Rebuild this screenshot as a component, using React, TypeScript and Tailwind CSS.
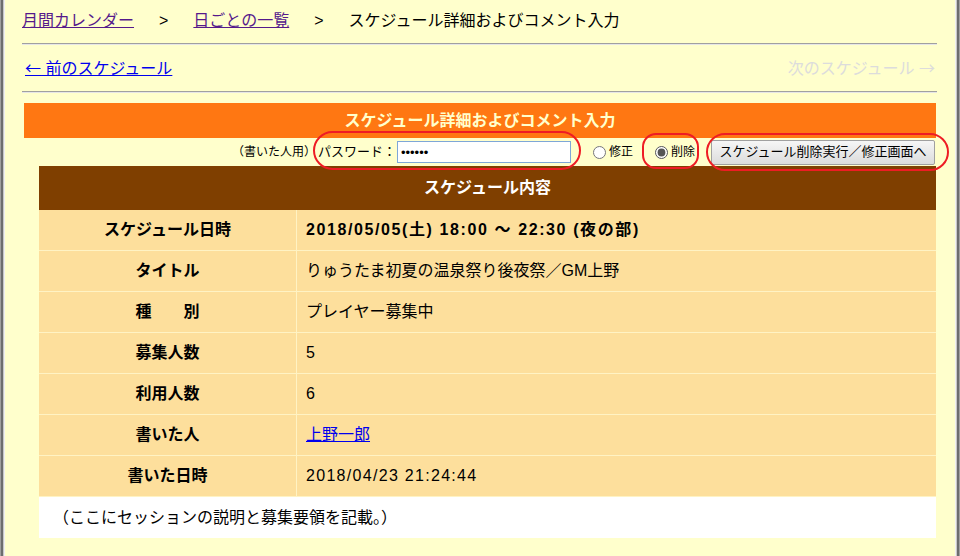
import React from "react";

const rows: { label: string; value: React.ReactNode; cls?: string }[] = [
  { label: "スケジュール日時", value: "2018/05/05(土) 18:00 ～ 22:30 (夜の部)", cls: "font-bold tracking-[1.6px]" },
  { label: "タイトル", value: "りゅうたま初夏の温泉祭り後夜祭／GM上野" },
  { label: "種　　別", value: "プレイヤー募集中" },
  { label: "募集人数", value: "5" },
  { label: "利用人数", value: "6" },
  {
    label: "書いた人",
    value: (
      <a href="#" className="text-[#0000ee] underline">
        上野一郎
      </a>
    ),
  },
  { label: "書いた日時", value: "2018/04/23 21:24:44", cls: "tracking-[1.3px]" },
];

export default function App() {
  return (
    <div
      className="w-[960px] h-[556px] flex bg-[#ffffcc] text-black overflow-hidden"
      style={{ fontFamily: '"Liberation Sans", "Noto Sans CJK JP", sans-serif' }}
    >
      {/* window frame left */}
      <div className="w-[5px] flex">
        <div className="w-[1px] bg-[#a0a0a0]" />
        <div className="w-[2px] bg-[#6d6d6d]" />
        <div className="w-[1px] bg-[#c8c8c8]" />
        <div className="w-[1px] bg-[#f0f0f0]" />
      </div>

      <main className="flex-1 pl-[17px] pr-[13px] text-[16px]">
        {/* Breadcrumb */}
        <div className="h-[43px] flex items-center leading-none pb-[1px]">
          <a href="#" className="text-[#551a8b] underline">月間カレンダー</a>
          <span className="mx-[25px]">&gt;</span>
          <a href="#" className="text-[#551a8b] underline">日ごとの一覧</a>
          <span className="mx-[25px]">&gt;</span>
          <span>スケジュール詳細およびコメント入力</span>
        </div>
        <div className="h-[2px] bg-[#a0a0a0] border-b border-[#e6e6e6] w-[915px]" />

        {/* prev / next */}
        <div className="h-[46px] w-[915px] flex items-center justify-between pl-[3px] pr-[2px] leading-none">
          <a href="#" className="text-[#0000ee] underline">
            <span className="font-['Noto_Sans_CJK_JP']">←</span> 前のスケジュール
          </a>
          <span className="text-[#dcdcdc]">
            次のスケジュール <span className="font-['Noto_Sans_CJK_JP']">→</span>
          </span>
        </div>
        <div className="h-[2px] bg-[#a0a0a0] border-b border-[#e6e6e6] w-[915px]" />

        <div className="ml-[2px] mt-[10px] w-[912px]">
          {/* orange header */}
          <div className="h-[35px] bg-[#ff7712] flex items-center justify-center text-[#ffffcc] font-bold text-[16px]">
            スケジュール詳細およびコメント入力
          </div>

          {/* password row */}
          <div className="relative h-[28px] flex items-center justify-end text-[12px] pr-[1px]">
            <span className="mr-[2px]">（書いた人用）</span>
            <span className="text-[13px]">パスワード：</span>
            <input
              type="password"
              defaultValue="abcdef"
              className="ml-[1px] w-[174px] h-[22px] bg-white border border-[#7ea7d8] px-[3px] text-[13px] outline-none"
            />
            <label className="ml-[22px] flex items-center gap-[3px]">
              <input type="radio" name="mode" className="w-[13px] h-[13px] m-0 accent-[#555555]" />
              <span>修正</span>
            </label>
            <label className="ml-[22px] flex items-center gap-[3px]">
              <input type="radio" name="mode" defaultChecked className="w-[13px] h-[13px] m-0 accent-[#555555]" />
              <span>削除</span>
            </label>
            <button className="ml-[16px] h-[25px] w-[224px] border border-[#a0a0a0] rounded-[2px] bg-gradient-to-b from-[#f6f6f6] to-[#dcdcdc] text-[13px]">
              スケジュール削除実行／修正画面へ
            </button>

            {/* annotation ellipses */}
            <div className="absolute left-[289px] top-[-7px] w-[268px] h-[39px] border-[2.5px] border-[#ee1c24] rounded-[22px]" />
            <div className="absolute left-[618px] top-[-5px] w-[57px] h-[36px] border-[2.5px] border-[#ee1c24] rounded-[14px]" />
            <div className="absolute left-[682px] top-[-5px] w-[243px] h-[38px] border-[2.5px] border-[#ee1c24] rounded-[20px]" />
          </div>

          {/* schedule content */}
          <div className="ml-[15px]">
            <div className="h-[44px] bg-[#7f3f00] flex items-center justify-center text-white font-bold text-[16px]">
              スケジュール内容
            </div>
            {rows.map((r) => (
              <div key={r.label} className="flex h-[41px] bg-[#fddf9c] border-b border-[#fff3c4] last:border-b-0">
                <div className="w-[258px] border-r border-[#fff3c4] flex items-center justify-center font-bold text-[16px]">
                  {r.label}
                </div>
                <div className={`flex-1 flex items-center pl-[9px] text-[16px] ${r.cls ?? ""}`}>
                  {r.value}
                </div>
              </div>
            ))}
            <div className="h-[41px] bg-white flex items-center pl-[14px] text-[16px]">
              （ここにセッションの説明と募集要領を記載。）
            </div>
          </div>
        </div>
      </main>

      {/* window frame right */}
      <div className="w-[5px] flex">
        <div className="w-[1px] bg-[#f0f0f0]" />
        <div className="w-[1px] bg-[#c8c8c8]" />
        <div className="w-[2px] bg-[#6d6d6d]" />
        <div className="w-[1px] bg-[#a0a0a0]" />
      </div>
    </div>
  );
}
